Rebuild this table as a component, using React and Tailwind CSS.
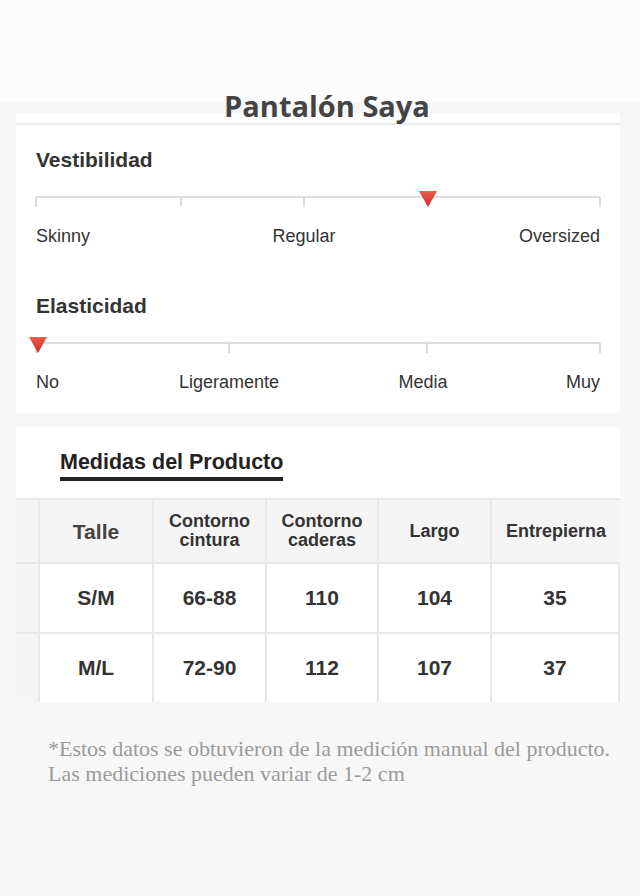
const sans = { fontFamily: '"Liberation Sans", Arial, sans-serif' }

const Slider = ({ ticks, marker }) => (
  <svg width="568" height="20" viewBox="0 0 568 20" className="block overflow-visible">
    <line x1="2" y1="6" x2="566" y2="6" stroke="#d4d4d4" strokeWidth="1.5" />
    {ticks.map((x) => (
      <line key={x} x1={x} y1="6" x2={x} y2="16" stroke="#cfcfcf" strokeWidth="1.5" />
    ))}
    <defs>
      <linearGradient id={`g${marker}`} x1="0" y1="0" x2="0" y2="1">
        <stop offset="0" stopColor="#f05a48" />
        <stop offset="1" stopColor="#c9302a" />
      </linearGradient>
    </defs>
    <polygon points={`${marker - 9},0 ${marker + 9},0 ${marker},16`} fill={`url(#g${marker})`} />
  </svg>
)

const Scale = ({ title, ticks, marker, labels }) => (
  <div className="flex flex-col">
    <h2 className="text-[21px] leading-[24px] font-bold text-[#333]">{title}</h2>
    <div className="mt-[19px] ml-[-2px]">
      <Slider ticks={ticks} marker={marker} />
    </div>
    <div className="relative h-[22px] mt-[14px] text-[18px] leading-[22px] text-[#333]">
      {labels.map((l) => (
        <span key={l.t} className={`absolute top-0 whitespace-nowrap ${l.cls}`} style={{ left: l.x }}>{l.t}</span>
      ))}
    </div>
  </div>
)

const cols = [
  ['Talle'],
  ['Contorno', 'cintura'],
  ['Contorno', 'caderas'],
  ['Largo'],
  ['Entrepierna'],
]

const rows = [
  ['S/M', '66-88', '110', '104', '35'],
  ['M/L', '72-90', '112', '107', '37'],
]

export default function App() {
  return (
    <div className="min-h-[896px] bg-[#f7f7f7]" style={sans}>
      <div className="h-[113px] bg-[linear-gradient(to_bottom,#fcfcfc_103px,#f7f7f7_103px)] pt-[90px] pl-[14px] text-center">
        <h1 className="text-[29px] leading-[32px] font-bold text-[#444]" style={{ fontFamily: '"Open Sans", sans-serif' }}>
          Pantalón Saya
        </h1>
      </div>

      <section className="ml-4 w-[604px] bg-white pt-[10px] pb-[20px]">
        <div className="h-[2px] bg-[#ebebeb]" />
        <div className="px-5 pt-[23px] flex flex-col gap-[47px]">
          <Scale
            title="Vestibilidad"
            ticks={[2, 147, 270, 566]}
            marker={394}
            labels={[
              { t: 'Skinny', x: 0, cls: '' },
              { t: 'Regular', x: 268, cls: '-translate-x-1/2' },
              { t: 'Oversized', x: 564, cls: '-translate-x-full' },
            ]}
          />
          <Scale
            title="Elasticidad"
            ticks={[2, 195, 393, 566]}
            marker={4}
            labels={[
              { t: 'No', x: 0, cls: '' },
              { t: 'Ligeramente', x: 193, cls: '-translate-x-1/2' },
              { t: 'Media', x: 387, cls: '-translate-x-1/2' },
              { t: 'Muy', x: 564, cls: '-translate-x-full' },
            ]}
          />
        </div>
      </section>

      <section className="ml-4 w-[604px] mt-[14px] bg-white">
        <div className="pl-[44px] pt-[23px] pb-[17px]">
          <div className="inline-block">
            <h2 className="text-[21.5px] leading-[24px] font-bold text-[#222]">Medidas del Producto</h2>
            <div className="h-[4px] bg-[#222] mt-[3px]" />
          </div>
        </div>
        <div className="grid grid-cols-[22px_114px_113px_112px_113px_1fr] border-t-2 border-[#e8e8e8]">
          <div className="bg-[#f5f5f5] border-b-2 border-[#e8e8e8]" />
          {cols.map((c, i) => (
            <div key={i} className={`h-[64px] bg-[#f5f5f5] border-l-2 border-b-2 border-[#e8e8e8] flex flex-col items-center justify-center leading-[19px] font-bold ${i === 0 ? 'text-[21px] text-[#444]' : 'text-[18px] text-[#333]'}`}>
              {c.map((l) => <span key={l}>{l}</span>)}
            </div>
          ))}
          {rows.map((r, ri) => (
            <div key={ri} className="contents">
              <div className={`bg-[#f5f5f5] ${ri === 0 ? 'border-b-2' : ''} border-[#e8e8e8]`} />
              {r.map((v, i) => (
                <div key={i} className={`${ri === 0 ? 'h-[70px] border-b-2' : 'h-[68px]'} border-l-2 ${i === 4 ? 'border-r-2' : ''} border-[#e8e8e8] flex items-center justify-center text-[21px] font-bold text-[#333]`}>
                  {v}
                </div>
              ))}
            </div>
          ))}
        </div>
      </section>

      <p className="pl-12 pt-[34px] whitespace-nowrap text-[22px] leading-[25px] text-[#9b9b9b]" style={{ fontFamily: '"Liberation Serif", "Times New Roman", serif' }}>
        *Estos datos se obtuvieron de la medición manual del producto.
        <br />
        Las mediciones pueden variar de 1-2 cm
      </p>
    </div>
  )
}
